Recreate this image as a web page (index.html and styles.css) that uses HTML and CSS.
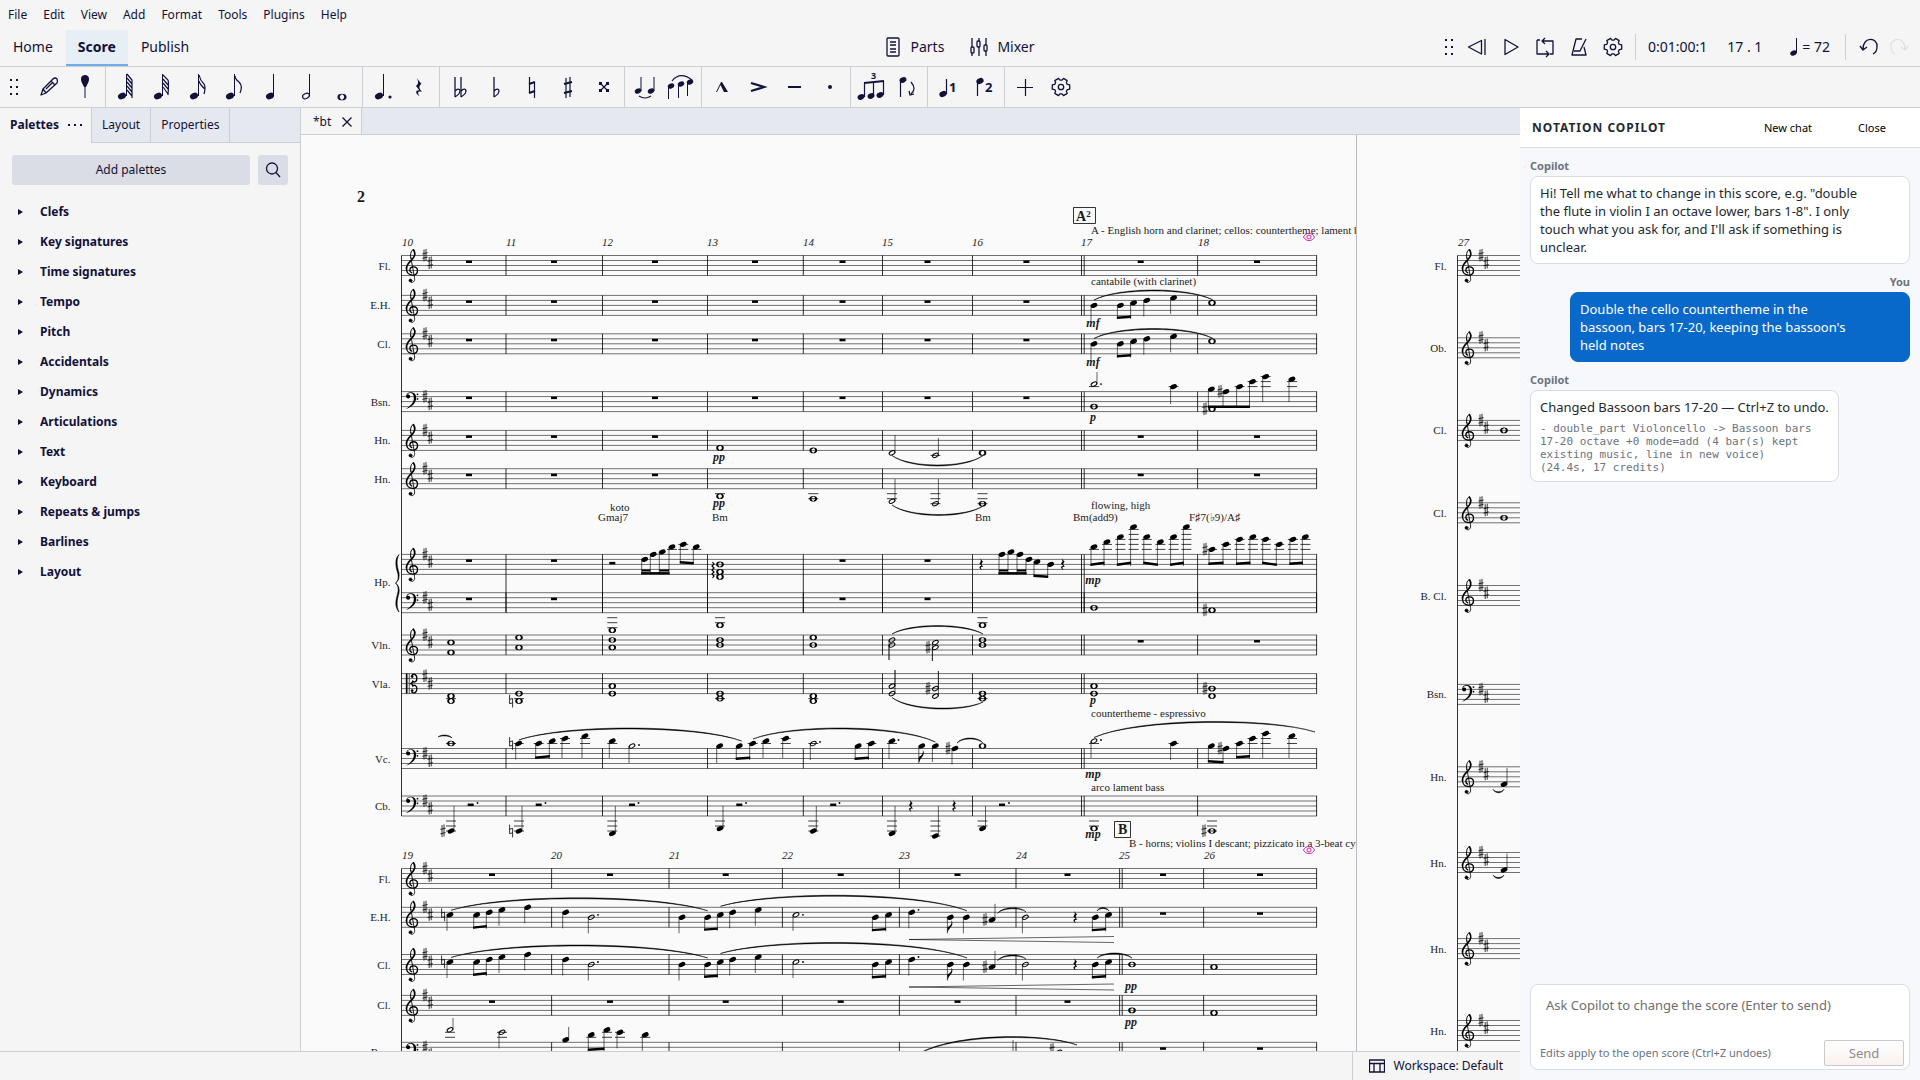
FILE: index.html
```html
<!DOCTYPE html>
<html lang="en">
<head>
<meta charset="utf-8">
<title>bt</title>
<link rel="stylesheet" href="styles.css">
</head>
<body>
<svg class="defs" aria-hidden="true">
  <defs>
    <ellipse id="n-head" rx="4.2" ry="3.1" transform="rotate(-25)"/>
    <path id="n-flat" d="M0 -13V7M0 1C5 -4 8 2 0 7" fill="none" stroke="currentColor" stroke-width="1.3"/>
    <path id="gear" d="M6.3-2.6L8.7-2.2V2.2L6.3 2.6L5.4 4.2L6.2 6.4L2.5 8.6L.9 6.8H-.9L-2.5 8.6L-6.2 6.4L-5.4 4.2L-6.3 2.6L-8.7 2.2V-2.2L-6.3-2.6L-5.4-4.2L-6.2-6.4L-2.5-8.6L-.9-6.8H.9L2.5-8.6L6.2-6.4L5.4-4.2ZM2.7 0A2.7 2.7 0 1 1-2.7 0A2.7 2.7 0 1 1 2.7 0Z" fill="none" stroke="currentColor" stroke-width="1.3" stroke-linejoin="round"/>
    <path id="q-rest" d="M-1.6-6L1.6-2.2C-.4-.4 0 .8 2 3.2C-.6 2.4-1.4 3.6 .4 6.2C-2.6 4.6-2.6 2 .2 2.2L-2-.6C-.2-2.4-.2-3.6-1.6-6Z"/>
    <g id="handle"><path d="M-4-8h2v2h-2zM2-8h2v2h-2zM-4-1h2v2h-2zM2-1h2v2h-2zM-4 6h2v2h-2zM2 6h2v2h-2z"/></g>

    <ellipse id="m-solid" rx="3.5" ry="2.3" transform="rotate(-24)"/>
    <ellipse id="m-half" rx="3.1" ry="1.8" transform="rotate(-28)" fill="none" stroke="#000" stroke-width="1"/>
    <path id="m-whole" fill-rule="evenodd" d="M-3.8 0A3.8 2.8 0 1 0 3.8 0A3.8 2.8 0 1 0-3.8 0ZM-.8-1.4A1.2 1.9 -24 1 0 .8 1.4A1.2 1.9 -24 1 0-.8-1.4Z"/>
    <path id="m-sharp" d="M-1-6V6M1-6.6V5.4M-2.6-1.6L2.6-2.8M-2.6 2.8L2.6 1.6" fill="none" stroke="#000" stroke-width=".8"/>
    <path id="m-nat" d="M-1.4-6.4V2.6L1.6 1.8M1.6 6.4V-2.6L-1.4-1.8" fill="none" stroke="#000" stroke-width=".8"/>
    <g id="m-treble" transform="scale(.3333)" fill="none" stroke="#000" stroke-linecap="round">
      <path stroke-width="3" d="M28 8C25-6 30-17 36-18"/>
      <path stroke-width="5" d="M36-17C43-7 40 4 30 14C20 23 15 31 15 40"/>
      <path stroke-width="4" d="M15 40C15 53 24 59 33 59C43 59 48 53 48 46C48 38 42 34 36 34C29 34 25 39 25 44C25 48 28 51 31 52"/>
      <path stroke-width="2.6" d="M28 6L39 66C41 76 36 82 30 81"/>
      <circle cx="27" cy="75" r="4.5" fill="#000" stroke-width="2"/>
    </g>
    <g id="m-bass" transform="scale(.3333)">
      <circle cx="20" cy="15" r="6"/><circle cx="48" cy="8" r="2.6"/><circle cx="48" cy="22" r="2.6"/>
      <path d="M14 15C14 6 20 2 28 2C39 2 44 9 44 19C44 34 31 46 13 52C28 42 37 33 37 19C37 9 33 4 27 4C21 4 17 7 17 13Z"/>
    </g>
    <g id="m-alto" transform="scale(.3333)">
      <path d="M13 0h5v60h-5zM22 0h2v60h-2z"/><circle cx="32" cy="9" r="4"/><circle cx="32" cy="51" r="4"/>
      <path d="M30 6C34 0 45 0 46 13C47 25 38 27 34 23C33 27 30 30 26 30C30 30 33 33 34 37C38 33 47 35 46 47C45 60 34 60 30 54" fill="none" stroke="#000" stroke-width="4"/>
    </g>
    <g id="m-eye" fill="none" stroke="#d6249f" stroke-width="1"><path d="M-5.500 0C-3.500-4.800 3.500-4.800 5.500 0C3.500 4.800-3.500 4.800-5.500 0Z"/><circle r="2"/></g>
  </defs>
</svg>
<div class="app">
  <nav class="menu" aria-label="Main menu">
    <button>File</button><button>Edit</button><button>View</button><button>Add</button><button>Format</button><button>Tools</button><button>Plugins</button><button>Help</button>
  </nav>
  <header class="topbar">
    <nav class="pages">
      <button>Home</button><button class="on">Score</button><button>Publish</button>
    </nav>
    <div class="views">
      <button><svg width="14" height="20" viewBox="0 0 14 20" class="line"><rect x="1" y="1" width="12" height="18" rx="1"/><path d="M4 5h6M4 8h6M4 12h6M4 15h6"/></svg>Parts</button>
      <button><svg width="18" height="20" viewBox="0 0 18 20" class="line"><path d="M2 1v9M2 16v3M9 1v3M9 10v9M16 1v7M16 14v5"/><rect x="1" y="10" width="3" height="6" rx="1"/><rect x="7" y="4" width="3" height="6" rx="1"/><rect x="14" y="8" width="3" height="6" rx="1"/></svg>Mixer</button>
    </div>
    <div class="transport">
      <svg class="grip" width="16" height="24" viewBox="-8 -12 16 24"><use href="#handle"/></svg>
      <button aria-label="Rewind"><svg width="34" height="24" viewBox="-17 -12 34 24" class="line"><path d="M4.500-6.500L-8.500 0L4.500 7Z M8 -8V8"/></svg></button>
      <button aria-label="Play"><svg width="34" height="24" viewBox="-17 -12 34 24" class="line"><path d="M-6-7.500V7.500L7 0Z"/></svg></button>
      <button aria-label="Loop"><svg width="34" height="24" viewBox="-17 -12 34 24" class="line"><path d="M-4 7H-8V-7M-5-7H-8M0-6H8V7H5M1 -6H-3M0-9L-3-6L0-3M-5 7H4M1 4L4 7L1 10"/></svg></button>
      <button aria-label="Metronome"><svg width="34" height="24" viewBox="-17 -12 34 24" class="line"><path d="M3-8H-3L-7 8H7L5 0M-5 4H1L7-8"/></svg></button>
      <button aria-label="Playback settings"><svg width="34" height="24" viewBox="-17 -12 34 24"><use href="#gear"/></svg></button>
      <div class="clock"><span>0:01:00:1</span><span>17 . 1</span><span class="tempo"><svg width="8" height="20" viewBox="0 0 8 20"><use href="#n-head" transform="translate(3.500 16) scale(.8)"/><path d="M6 1h1v15h-1z"/></svg>= 72</span></div>
      <button class="narrow" aria-label="Undo"><svg width="30" height="24" viewBox="-15 -12 30 24" class="line"><path d="M-6 2C-6-11 9-10 8 0C8 4 6 6 4 7M-9-1L-6 3L-2 0"/></svg></button>
      <button class="narrow" aria-label="Redo" disabled><svg width="30" height="24" viewBox="-15 -12 30 24" class="line"><path d="M6 2C6-11-9-10-8 0C-8 4-6 6-4 7M9-1L6 3L2 0"/></svg></button>
    </div>
  </header>
  <div class="toolbar" role="toolbar" aria-label="Note input">
    <div class="tools">
      <svg class="wide" viewBox="-14 -20 31 40"><use href="#handle"/></svg>
      <button aria-label="Note input"><svg viewBox="0 0 36 40" class="line"><path d="M10 28L12 22L22 12Q24 10 26 12Q27 14 26 16L15 26ZM12 22L15 26M20 14L24 18M15 22L22 15"/></svg></button>
      <button aria-label="Pin"><svg viewBox="0 0 36 40"><path d="M18 8C22 8 23 12 21 16L19 20H17L15 16C13 12 14 8 18 8Z"/><path d="M17 19h2v12h-2z" opacity=".5"/></svg></button>
    </div>
    <div class="tools">
      <button aria-label="64th note"><svg viewBox="0 0 36 40"><use href="#n-head" x="14" y="29"/><path d="M18 7h1v22h-1z"/><path class="s" d="M19 7L24 13V31M19 11L24 17M19 15L24 21M19 19L24 25M19 23L24 29"/></svg></button>
      <button aria-label="32nd note"><svg viewBox="0 0 36 40"><use href="#n-head" x="14" y="29"/><path d="M18 7h1v22h-1z"/><path class="s" d="M19 8L24 13Q25 16 24 28M19 12L24 18M19 16L24 22M19 20L24 27"/></svg></button>
      <button aria-label="16th note"><svg viewBox="0 0 36 40"><use href="#n-head" x="14" y="29"/><path d="M18 7h1v22h-1z"/><path class="s" d="M19 8Q20 13 24 17Q26 20 24 27M19 14Q20 18 25 22"/></svg></button>
      <button aria-label="Eighth note"><svg viewBox="0 0 36 40"><use href="#n-head" x="14" y="29"/><path d="M18 7h1v22h-1z"/><path class="s" d="M19 9Q19 12 23 15Q27 19 24 26"/></svg></button>
      <button aria-label="Quarter note"><svg viewBox="0 0 36 40"><use href="#n-head" x="18" y="29"/><path d="M21 7h1v22h-1z"/></svg></button>
      <button aria-label="Half note"><svg viewBox="0 0 36 40"><ellipse cx="18" cy="29" rx="3.600" ry="2.400" transform="rotate(-25 18 29)" class="s"/><path d="M21 7h1v22h-1z"/></svg></button>
      <button aria-label="Whole note"><svg viewBox="0 0 36 40"><use href="#m-whole" transform="translate(18 30) scale(1.200)"/></svg></button>
    </div>
    <div class="tools">
      <button aria-label="Dotted"><svg viewBox="0 0 36 40"><use href="#n-head" x="14" y="29"/><path d="M18 7h1v22h-1z"/><circle cx="25" cy="30" r="1.600"/></svg></button>
      <button aria-label="Rest"><svg viewBox="0 0 36 40"><use href="#q-rest" transform="translate(18 20) scale(1.500)"/></svg></button>
    </div>
    <div class="tools">
      <button aria-label="Double flat"><svg viewBox="0 0 36 40"><use href="#n-flat" x="13" y="23"/><use href="#n-flat" x="19" y="23"/></svg></button>
      <button aria-label="Flat"><svg viewBox="0 0 36 40"><use href="#n-flat" x="16" y="23"/></svg></button>
      <button aria-label="Natural"><svg viewBox="0 0 36 40"><path class="s" d="M15.500 10V26M20.500 31V15"/><path class="t" d="M15 17L21 15M15 26L21 24"/></svg></button>
      <button aria-label="Sharp"><svg viewBox="0 0 36 40"><path class="s" d="M16 11V31M20 10V30"/><path class="t" d="M14 17L22 15M14 26L22 24"/></svg></button>
      <button aria-label="Double sharp"><svg viewBox="0 0 36 40"><path class="s" d="M14 16L22 24M22 16L14 24"/><path d="M13 15h3v3h-3zM20 15h3v3h-3zM13 22h3v3h-3zM20 22h3v3h-3z"/></svg></button>
    </div>
    <div class="tools">
      <button aria-label="Tie"><svg viewBox="0 0 36 40"><use href="#n-head" transform="translate(11 24) scale(.8)"/><use href="#n-head" transform="translate(24 24) scale(.8)"/><path class="u" d="M14 24V10M27 24V10"/><path class="s" d="M12 29Q18 33 24 29"/></svg></button>
      <button aria-label="Slur"><svg viewBox="0 0 36 40"><use href="#n-head" transform="translate(8 19) scale(.8)"/><use href="#n-head" transform="translate(18 17) scale(.8)"/><use href="#n-head" transform="translate(27 15) scale(.8)"/><path class="u" d="M5.500 19V32M15.500 17V31M24.500 15V29"/><path class="s" d="M9 14Q17 4 29 13"/></svg></button>
    </div>
    <div class="tools">
      <button aria-label="Marcato"><svg viewBox="0 0 36 40"><path d="M12 25L17 15H18L24 25H20L16.500 18L13 25Z"/></svg></button>
      <button aria-label="Accent"><svg viewBox="0 0 36 40"><path class="t" d="M11 16L24 20L11 24"/></svg></button>
      <button aria-label="Tenuto"><svg viewBox="0 0 36 40"><path d="M12 19h13v2h-13z"/></svg></button>
      <button aria-label="Staccato"><svg viewBox="0 0 36 40"><circle cx="18" cy="20" r="2"/></svg></button>
    </div>
    <div class="tools">
      <button aria-label="Tuplet"><svg viewBox="0 0 36 40"><use href="#n-head" transform="translate(8 30) scale(.85)"/><use href="#n-head" transform="translate(18 29) scale(.85)"/><use href="#n-head" transform="translate(27 28) scale(.85)"/><path class="s" d="M11.500 30V16M20.500 28V15M30.500 28V14"/><path class="t" d="M11 16L31 14"/><text x="18" y="12" class="tiny">3</text></svg></button>
      <button aria-label="Flip direction"><svg viewBox="0 0 36 40"><use href="#n-head" transform="translate(14 13) scale(.85)"/><path class="s" d="M11.500 13V30M22 15Q28 22 22 27M20 24L21 28L25 27"/></svg></button>
    </div>
    <div class="tools">
      <button aria-label="Voice 1"><svg viewBox="0 0 36 40"><use href="#n-head" transform="translate(13 27) scale(.9)"/><path class="s" d="M16.500 27V12"/><text x="19" y="25" class="num">1</text></svg></button>
      <button aria-label="Voice 2"><svg viewBox="0 0 36 40"><use href="#n-head" transform="translate(14 14) scale(.9)"/><path class="s" d="M11.500 14V29"/><text x="19" y="25" class="num">2</text></svg></button>
    </div>
    <div class="tools last">
      <button aria-label="Add"><svg viewBox="0 0 36 40"><path class="s" d="M10 20.500H26M18.500 12V29"/></svg></button>
      <button aria-label="Customize toolbar"><svg viewBox="-18 -20 36 40"><use href="#gear"/></svg></button>
    </div>
  </div>
  <main class="body">
    <div class="workspace">
      <div class="docks">
        <aside class="dock">
          <div class="docktabs" role="tablist">
            <button class="on" role="tab">Palettes <span class="more"><i></i><i></i><i></i></span></button><button role="tab">Layout</button><button role="tab">Properties</button><span class="fill"></span>
          </div>
          <div class="find">
            <button class="add">Add palettes</button>
            <button class="search" aria-label="Search"><svg width="16" height="16" viewBox="0 0 16 16" class="line"><circle cx="7" cy="6.500" r="5.500"/><path d="M11 10.500L15 15"/></svg></button>
          </div>
          <ul class="tree">
            <li>Clefs</li><li>Key signatures</li><li>Time signatures</li><li>Tempo</li><li>Pitch</li><li>Accidentals</li><li>Dynamics</li><li>Articulations</li><li>Text</li><li>Keyboard</li><li>Repeats &amp; jumps</li><li>Barlines</li><li>Layout</li>
          </ul>
        </aside>
        <section class="editor">
          <div class="filetabs"><div class="file">*bt<button aria-label="Close score"><svg width="10" height="10" viewBox="0 0 10 10" class="line"><path d="M.500.500L9.500 9.500M9.500.500L.500 9.500"/></svg></button></div></div>
          <div class="canvas"><svg id="score" role="img" aria-label="Score"></svg></div>
        </section>
      </div>
      <footer class="status"><button><svg width="16" height="14" viewBox="0 0 16 14" class="line"><rect x=".500" y="1" width="15" height="12"/><path d="M0 4.500H16M5 4.500V13M11 4.500V13"/></svg>Workspace: Default</button></footer>
    </div>
    <aside class="copilot">
      <div class="cohead"><h2>NOTATION COPILOT</h2><button>New chat</button><button>Close</button></div>
      <div class="chat">
        <article class="msg"><h3>Copilot</h3><div class="bubble"><p>Hi! Tell me what to change in this score, e.g. "double the flute in violin I an octave lower, bars 1-8". I only touch what you ask for, and I'll ask if something is unclear.</p></div></article>
        <article class="msg me"><h3>You</h3><div class="bubble"><p>Double the cello countertheme in the bassoon, bars 17-20, keeping the bassoon's held notes</p></div></article>
        <article class="msg fit"><h3>Copilot</h3><div class="bubble"><p>Changed Bassoon bars 17-20 — Ctrl+Z to undo.</p><p class="log">- double_part Violoncello -&gt; Bassoon bars<br>17-20 octave +0 mode=add (4 bar(s) kept<br>existing music, line in new voice)<br>(24.4s, 17 credits)</p></div></article>
      </div>
      <form class="ask">
        <textarea aria-label="Message" placeholder="Ask Copilot to change the score (Enter to send)"></textarea>
        <div class="askrow"><span>Edits apply to the open score (Ctrl+Z undoes)</span><button type="button" disabled>Send</button></div>
      </form>
    </aside>
  </main>
</div>
<script src="score.js"></script>
</body>
</html>
```
FILE: styles.css
```css
* { box-sizing: border-box; }
body { margin: 0; font: 12px/16px "Noto Sans", sans-serif; color: #11113a; background: #f5f5f5; }
button { font: inherit; color: inherit; background: none; border: 0; padding: 0; margin: 0; }
svg { display: block; fill: currentColor; }
h2, h3, p, ul { margin: 0; padding: 0; }
.defs { position: absolute; width: 0; height: 0; }
.line { fill: none; stroke: currentColor; stroke-width: 1.3; stroke-linejoin: round; }
.app { display: flex; flex-direction: column; height: 100vh; overflow: hidden; }

.menu { display: flex; gap: 16px; height: 30px; padding: 0 8px; flex: none; }
.topbar { display: grid; grid-template-columns: 1fr auto 1fr; height: 36px; flex: none; font-size: 14px; }
.pages { display: flex; }
.pages button { padding: 0 13px 2px; }
.pages .on { font-weight: 700; background: #e6eef6; border-bottom: 2px solid #6fadea; padding: 0 12px; }
.views { display: flex; gap: 26px; padding-bottom: 2px; }
.views button { display: flex; align-items: center; gap: 11px; }
.views button + button { gap: 9px; }
.transport { display: flex; align-items: center; justify-content: flex-end; padding: 0 6px 2px 0; }
.grip { margin-right: 3px; }
.clock { display: flex; align-items: center; height: 26px; margin: 0 8px 0 5px; padding: 0 15px 0 12px; border: solid #cbced3; border-width: 0 1px; }
.clock span + span { margin-left: 20px; }
.clock span + .tempo { display: flex; align-items: center; gap: 4px; margin-left: 28px; }
.transport :disabled { color: #e0e1e4; }

.toolbar { display: flex; height: 42px; flex: none; border: solid #cbced3; border-width: 1px 0; }
.tools { display: flex; padding: 0 2px; border-right: 1px solid #cbced3; }
.tools:first-child { padding-left: 0; }
.tools svg { width: 36px; height: 40px; }
.tools .wide { width: 31px; }
.tools.last { border: 0; }
.s { fill: none; stroke: currentColor; stroke-width: 1.2; }
.t { fill: none; stroke: currentColor; stroke-width: 2.2; }
.u { fill: none; stroke: currentColor; stroke-width: 1; }
.tiny { font-size: 9px; font-weight: 700; }
.num { font-size: 13px; font-weight: 700; }

.body { display: flex; flex: 1; min-height: 0; }
.workspace { flex: 1; min-width: 0; display: flex; flex-direction: column; }
.docks { flex: 1; min-height: 0; display: flex; }
.dock { width: 301px; border-right: 1px solid #cbced3; }
.docktabs { display: flex; height: 35px; }
.docktabs button { padding: 0 10px; background: #e5e9ef; border: solid #cbced3; border-width: 0 1px 1px 0; }
.docktabs .on { display: flex; align-items: center; gap: 9px; width: 92px; padding-bottom: 1px; font-weight: 700; background: none; border-bottom: 0; }
.more { display: flex; gap: 4px; }
.more i { width: 2px; height: 2px; background: #11113a; }
.docktabs .fill { flex: 1; background: #e5e9ef; border-bottom: 1px solid #cbced3; }
.find { display: flex; gap: 8px; padding: 12px; }
.find button { height: 30px; border-radius: 3px; background: #dadde5; }
.find .add { flex: 1; }
.find .search { width: 30px; padding-left: 7px; }
.tree { list-style: none; font-weight: 700; }
.tree li { display: flex; align-items: center; height: 30px; padding-left: 18px; gap: 17px; }
.tree li::before { content: ""; border: solid transparent; border-width: 3px 0 3px 5px; border-left-color: #11113a; }

.editor { flex: 1; min-width: 0; display: flex; flex-direction: column; }
.filetabs { height: 27px; flex: none; background: #e5e9ef; border-bottom: 1px solid #cbced3; }
.file { display: flex; align-items: center; justify-content: space-between; width: 61px; height: 26px; padding: 1px 9px 0 12px; background: #f5f5f5; border-right: 1px solid #cbced3; }
.canvas { flex: 1; min-height: 0; overflow: hidden; background: #fafafa; }
#score { width: 100%; height: 100%; color: #000; font-family: "Liberation Serif", serif; font-size: 11px; }
#score text { fill: #1c1c1c; }
.lines { fill: none; stroke: #000; stroke-width: 1; stroke-opacity: .55; }
.ledger { fill: none; stroke: #000; stroke-width: 1; stroke-opacity: .75; }
.bar { fill: none; stroke: #000; stroke-width: 1; stroke-opacity: .8; }
.stem { fill: none; stroke: #000; stroke-width: 1; stroke-opacity: .6; }
.edge { fill: none; stroke: #b8bbc0; }
.right { text-anchor: end; }
.it { font-style: italic; }
.dyn { font-style: italic; font-weight: 700; font-size: 12px; text-anchor: middle; }
.mark { font-weight: 700; font-size: 14px; }
.pageno { font-weight: 700; font-size: 16px; }
.sup { font-size: 9px; }

.status { display: flex; justify-content: flex-end; height: 29px; flex: none; border-top: 1px solid #cbced3; }
.status button { display: flex; align-items: center; gap: 8px; padding: 0 17px 0 16px; border-left: 1px solid #cbced3; }

.copilot { width: 400px; display: flex; flex-direction: column; background: #f7f8fb; color: #24292f; }
.cohead { display: flex; align-items: center; gap: 4px; height: 40px; padding: 0 8px 0 12px; background: #fff; border-bottom: 1px solid #d8dce3; }
.cohead h2 { flex: 1; font-size: 12px; line-height: 16px; letter-spacing: 1px; }
.cohead button { width: 80px; font-size: 11px; color: #000; }
.chat { flex: 1; padding: 10px; display: flex; flex-direction: column; gap: 10px; }
.msg { display: flex; flex-direction: column; gap: 3px; }
.msg h3 { font-size: 11px; line-height: 15px; color: #6b737d; }
.bubble { padding: 7px 9px; font-size: 13px; line-height: 18px; background: #fff; border: 1px solid #d8dce3; border-radius: 8px; }
.bubble p { max-width: 330px; }
.me { padding-left: 40px; }
.me h3 { text-align: right; }
.me .bubble { background: #0969ca; border-color: #0969ca; color: #fff; }
.me .bubble p { max-width: 280px; }
.fit { align-items: flex-start; }
.bubble .log { margin-top: 6px; font: 11px/13px "DejaVu Sans Mono", monospace; color: #6b737d; }
.ask { display: flex; flex-direction: column; margin: 0 10px 10px; height: 86px; padding: 0 5px 3px 9px; background: #fff; border: 1px solid #d8dce3; border-radius: 8px; }
.ask textarea { flex: 1; min-height: 0; border: 0; padding: 11px 6px 0; resize: none; background: none; font: 13px/18px "Noto Sans", sans-serif; outline: 0; }
.ask textarea::placeholder { color: #6e6e6e; }
.askrow { display: flex; align-items: center; justify-content: space-between; font-size: 11px; color: #6b737d; }
.askrow button { width: 80px; height: 26px; font-size: 13px; color: #8c8c8c; border: 1px solid #c9c9c9; border-radius: 2px; background: linear-gradient(#fff, #f9f1ef); }
```
FILE: score.js
```js
// Draws the engraved pages. Staff positions (p) count half spaces down from the top line.
const ORIGIN = [301, 135];
const out = [];
const put = (s) => out.push(s);
const use = (id, x, y) => put(`<use href="#${id}" x="${x}" y="${y}"/>`);
const glyph = (id, x, y) => put(`<g transform="translate(${x} ${y})"><use href="#${id}"/></g>`);
const text = (x, y, s, cls = "") => put(`<text x="${x}" y="${y}" class="${cls}">${s}</text>`);
const path = (cls, d) => put(`<path class="${cls}" d="${d}"/>`);

function ledgers(x, top, p) {
  let d = "";
  for (let k = -2; k >= p; k -= 2) d += `M${x - 5} ${top + k * 2.5}h10`;
  for (let k = 10; k <= p; k += 2) d += `M${x - 5} ${top + k * 2.5}h10`;
  if (d) path("ledger", d);
}

// An arc that starts and ends thin and swells in the middle.
function slur(x1, y1, x2, y2, peak) {
  const c = peak + (peak - (y1 + y2) / 2) / 3;
  const a = x1 + (x2 - x1) * 0.2, b = x2 - (x2 - x1) * 0.2;
  put(`<path d="M${x1} ${y1}C${a} ${c} ${b} ${c} ${x2} ${y2}C${b} ${c + 1.3} ${a} ${c + 1.3} ${x1} ${y1}Z" stroke="#000" stroke-width=".5"/>`);
}

function staff(left, right, top, clef, items) {
  let d = "";
  for (let i = 0; i < 5; i++) d += `M${left} ${top + i * 5}H${right}`;
  path("lines", d);
  glyph("m-" + clef, left, top);
  const k = { treble: [0, 7.5], bass: [5, 12.5], alto: [2.5, 10] }[clef];
  glyph("m-sharp", left + 23.5, top + k[0]);
  glyph("m-sharp", left + 28.7, top + k[1]);
  for (const item of items.split(";").map((s) => s.trim()).filter(Boolean)) {
    const [op, ...v] = item.split(/\s+/);
    const x = +v[0], p = +v[1], y = top + p * 2.5;
    if (op === "R") put(`<rect x="${x - 3}" y="${top + 5}" width="6" height="2.500"/>`);
    else if (op === "h") put(`<rect x="${x - 3}" y="${top + 7.5}" width="6" height="2.500"/>`);
    else if (op === "r") glyph("q-rest", x, top + 9.5);
    else if (op === ".") put(`<circle cx="${x}" cy="${y}" r=".9"/>`);
    else if (op === "#") glyph("m-sharp", x, y);
    else if (op === "n") glyph("m-nat", x, y);
    else if (op === "S") slur(...v.map(Number));
    else if (op === "W") { ledgers(x, top, p); use("m-whole", x, y); }
    else if (op === "H" || op === "Q" || op === "E") {
      ledgers(x, top, p);
      use(op === "H" ? "m-half" : "m-solid", x, y);
      const up = v[2] === "u", sx = up ? x + 3 : x - 3;
      const end = v[3] ? +v[3] : y + (up ? -16 : 16);
      path("stem", `M${sx} ${y}V${end}`);
      if (op === "E") put(`<path d="M${sx} ${end}Q${sx + 1} ${end - 4} ${sx + 4} ${end - 7}Q${sx + 6} ${end - 10} ${sx + 4} ${end - 13}Q${sx + 5} ${end - 8} ${sx} ${end - 6}Z"/>`);
    } else if (op === "B") { // B count y1 y2 x p x p ...: notes hanging over a beam
      const n = +v[0], y1 = +v[1], y2 = +v[2], a = v.slice(3).map(Number), m = a.length / 2;
      const x1 = a[0] - 3, x2 = a[2 * m - 2] - 3;
      for (let i = 0; i < m; i++) {
        const nx = a[2 * i], ny = top + a[2 * i + 1] * 2.5;
        ledgers(nx, top, a[2 * i + 1]);
        use("m-solid", nx, ny);
        path("stem", `M${nx - 3} ${ny}V${y1}`);
        if (n === 2 && i % 2 === 0) put(`<path d="M${nx - 3} ${y1 - 5}H${a[2 * i + 2] - 3}v2H${nx - 3}Z"/>`);
      }
      put(`<path d="M${x1 - .5} ${y1}L${x2 + .5} ${y2}v-2.400L${x1 - .5} ${y1 - 2.4}Z"/>`);
    }
  }
}

function system(left, right, bars, staves, joined) {
  const last = staves[staves.length - 1].y + 20;
  path("bar", `M${left} ${staves[0].y}V${last}`);
  for (const s of staves) {
    if (s.name) text(left - 11, s.y + (s.drop || 14), s.name, "right");
    staff(left, right, s.y, s.clef || "treble", s.items || "");
    const bottom = s.y + (s.name === joined && joined ? 58 : 20);
    path("bar", bars.map((x) => `M${x} ${s.y}V${bottom}`).join(""));
  }
}

const rests = (...xs) => xs.map((x) => "R " + x).join(";") + ";";
const A = [469, 554, 655, 755, 842.5, 927.5, 1026.4, 1140.7, 1257];
const melody = (b) => `Q 1094 4 d; B 1 ${b} ${b - 1} 1120.4 4 1133.6 3; Q 1146.8 2 d; Q 1173.6 1 d; W 1212 3;
  S 1094 ${b - 19} 1213 ${b - 19} ${b - 29};`;

text(357, 202, "2", "pageno");
[[10, 402], [11, 506], [12, 602], [13, 707], [14, 803], [15, 882], [16, 972], [17, 1081], [18, 1198]]
  .forEach(([n, x]) => text(x, 246, n, "it"));

system(401.5, 1317, [506, 602.5, 707.5, 803.3, 882.5, 972.5, 1081.5, 1084.2, 1197.6, 1316.6], [
  { name: "Fl.", y: 255.5, items: rests(...A) },
  { name: "E.H.", y: 295.4, items: rests(...A.slice(0, 7)) + melody(319) },
  { name: "Cl.", y: 333.8, items: rests(...A.slice(0, 7)) + melody(357.5) },
  { name: "Bsn.", y: 391.6, clef: "bass", items: rests(...A.slice(0, 7)) +
    "H 1094 -3 u 372; . 1101 -3; Q 1173.6 -2 d 404; W 1094 6; B 1 408 408 1211.4 -1 1226 0 1239.6 -2 1252.5 -4; # 1220 0; Q 1265.7 -6 d 402; Q 1292 -5 d 402; # 1205 7; W 1212 7;" },
  { name: "Hn.", y: 430.4, items: rests(469, 554, 655, 1140.7, 1257) +
    "W 720 7; W 813.3 8; H 892 9 u 435; H 935.4 10 u 438; W 982.5 9; S 892 455.5 983 455.5 465;" },
  { name: "Hn.", y: 468.7, items: rests(469, 554, 655, 1140.7, 1257) +
    "W 720 11; W 813.3 12; H 892 13 u 479; H 935.4 14 u 479; W 982.5 14; S 892 505 983 506 514.5;" },
  { name: "Hp.", y: 554.4, drop: 32, items: rests(469, 554, 842.5, 927.5) +
    `h 612.3; B 2 574.500 574.500 644.7 2 653.3 0 662.3 -1 672 -3; B 1 563.500 564.500 683.3 -4 696.3 -3;
    W 720 4; W 720 7; W 720 9; r 981.4; B 2 574.500 574.500 1002 0 1011 -1 1020 0 1029 2; B 1 577 578 1037 3 1050.7 4; r 1063;
    B 1 566 564 1094 -3 1107 -5; B 1 566 564 1120.4 -7 1133.6 -11; B 1 564 566 1146.8 -7 1160.4 -5; B 1 566 564 1173.6 -7 1186.4 -11;
    # 1205 -2; B 1 565 564 1212 -2 1226 -4; B 1 565 564 1239.6 -6 1252.9 -7; B 1 564 566 1265.7 -6 1279.3 -4; B 1 565 564 1292.9 -6 1305.4 -7;` },
  { y: 592.7, clef: "bass", items: rests(469, 554, 842.5, 927.5) + "W 612.3 15; W 720 13; W 982.5 13; W 1094 6; # 1205 7; W 1212 7;" },
  { name: "Vln.", y: 635, items: rests(1140.7, 1257) +
    `W 451 3; W 451 7; W 519 1; W 519 5; W 612.3 2; W 612.3 5; W 720 2; W 720 4; W 813.3 1; W 813.3 4;
    H 892 2 d 660; H 892 4 d 660; # 928 5; H 935.4 3 d 661; H 935.4 5 d 661; W 982.5 2; W 982.5 4; S 892 634 983 634 625.500;` },
  { name: "Vla.", y: 673.6, clef: "alto", items:
    `W 451 9; W 451 11; n 511 11; W 519 8; W 519 11; W 612.3 5; W 612.3 8; W 720 8; W 720 10; W 813.3 9; W 813.3 11;
    H 892 8 u 670; H 892 5 u 670; # 928 6; H 935.4 9 u 671; H 935.4 6 u 671; W 982.5 8; W 982.5 10; S 892 697.500 983 702 708;
    W 1094 5; W 1094 8; # 1205 6; W 1212 6; W 1212 9;` },
  { name: "Vc.", y: 748.5, clef: "bass", items:
    `S 438 737 452 738 735; W 451 -2; n 511 -2; Q 518.7 -2 d; B 1 759 757.500 538.7 -2 552.3 -3; Q 565 -4 d 758; Q 585 -5 d 758;
    Q 612.3 -3 d 758; H 632 -1 d 763; . 639 -1.400; Q 719.7 -1 d 763; B 1 760 759 739.3 -1 752.7 -2; Q 766 -3 d 758; Q 785.7 -4 d 758;
    H 813.3 -2 d 760; . 820 -2.600; B 1 760 759 858.2 -1 871.4 -2; Q 892 -3 d 759; . 898.500 -3.400; E 921.8 -1 d 763; Q 935.4 -1 d; # 948 0; Q 955 0 d;
    S 957 743 983 743 738; W 982.5 -1; H 1094 -3 d 758; . 1101 -3.400; Q 1173.6 -2 d 760;
    B 1 762.500 763.500 1211.4 -1 1226 0; # 1220 0; B 1 758.500 757.500 1239.6 -2 1252.5 -4; Q 1265.7 -6 d 758; Q 1292 -5 d 758;
    S 518.7 740 741.7 741 728; S 753 739 935.4 742 728; S 1094 737.500 1315 732 721.500;` },
  { name: "Cb.", y: 796, clef: "bass", items:
    `# 443 14; Q 451 14 u 806; h 470.7; . 477.500 2.800; n 511 14; Q 519 14 u 806; h 538.7; . 545.500 2.800; Q 612.3 15 u 806; h 632; . 638.500 2.800;
    Q 720 13 u 806; h 739.3; . 746 2.800; Q 813.3 14 u 806; h 833.2; . 839.500 2.800; Q 892 15 u 806; r 911; Q 935.4 16 u 806; r 954.3;
    Q 982.5 13 u 806; h 1002; . 1009 2.800; W 1094 13; # 1204 14; W 1212 14;` },
], "Hp.");

// brace and arpeggio of the harp
put('<path d="M399 554.500C394 559 396 568 398 574Q399 581 395.500 583Q399 586 398 592C396 600 394 606 399 612C396 606 397 600 399 593Q400 586 395.500 583Q400 580 399 573C397 566 396 560 399 554.500Z" stroke="#000" stroke-width=".6"/>');
path("s", "M712.500 562l1.500 2l-2 2l2 2l-2 2l2 2l-2 2l2 2l-1.500 2");

[["pp", 719, 461], ["pp", 719, 507], ["mf", 1093, 327], ["mf", 1093, 366], ["p", 1093, 421], ["mp", 1093, 584], ["p", 1093, 704], ["mp", 1093, 778], ["mp", 1093, 838]]
  .forEach(([s, x, y]) => text(x, y, s, "dyn"));
text(610, 511, "koto");
text(598, 521, "Gmaj7");
text(712, 521, "Bm");
text(975, 521, "Bm");
text(1073, 521, "Bm(add9)");
text(1189, 521, "F♯7(♭9)/A♯");
text(1091, 509, "flowing, high");
text(1091, 285, "cantabile (with clarinet)");
text(1091, 234, "A - English horn and clarinet; cellos: countertheme; lament bass");
text(1091, 717, "countertheme - espressivo");
text(1091, 791, "arco lament bass");
put('<path class="bar" d="M1073.500 207.500h22v16h-22z"/><path class="bar" d="M1114.500 821.500h16v16h-16z"/>');
put('<text x="1076" y="221" class="mark">A<tspan class="sup" dy="-4">2</tspan></text>');
text(1118, 834, "B", "mark");
text(1129, 847, "B - horns; violins I descant; pizzicato in a 3-beat cycle");
use("m-eye", 1309, 237);
use("m-eye", 1309, 850);

// second system
[[19, 402], [20, 551], [21, 669], [22, 782], [23, 899], [24, 1016], [25, 1119], [26, 1204]]
  .forEach(([n, x]) => text(x, 859, n, "it"));
const C = [492, 610, 725.7, 840.7, 957.5, 1067.5, 1163, 1260];
const theme = (t) => `n 443 3; Q 450 3 d; B 1 ${t + 21.5} ${t + 20} 476.7 3 489.3 2; Q 502 1 d; Q 527.7 0 d; Q 565.7 2 d; H 591.3 4 d; . 598 3;
  Q 682 4 d; B 1 ${t + 23.5} ${t + 22.5} 707.7 4 720.3 3; Q 732.7 2 d; Q 758.3 1 d; H 796 3 d; . 803 3;
  B 1 ${t + 24} ${t + 23} 875.4 4 888.6 3; Q 911.8 2 d; . 918.5 1; E 950.4 4 d; Q 966.4 4 d; # 985 5; Q 992 5 u; H 1025.4 4 d; r 1075.4;
  B 1 ${t + 24} ${t + 23} 1095.4 4 1108.6 3;
  S 451 ${t + 3} 707.7 ${t + 3.5} ${t - 9.5}; S 720.5 ${t - 1} 967 ${t + 3.5} ${t - 12}; S 997.5 ${t + 6} 1026 ${t + 4.5} ${t + .5};`;
const hairpin = (y) => path("stem", `M1114 ${y - 3}L909 ${y}L1114 ${y + 3}`);
system(401.5, 1317, [551.6, 669, 782.4, 899.4, 1016, 1119.6, 1122.2, 1203.6, 1316.6], [
  { name: "Fl.", y: 868.5, items: rests(...C) },
  { name: "E.H.", y: 907.3, items: theme(907.3) + rests(1163, 1260) + "S 1097 911 1109 911 907.500;" },
  { name: "Cl.", y: 954.5, items: theme(954.5) + "S 1097 958 1132 958 953; W 1132 4; W 1214 5;" },
  { name: "Cl.", y: 995.4, items: rests(...C.slice(0, 6)) + "W 1132 6; W 1214 7;" },
  { name: "Bsn.", y: 1042.3, clef: "bass", items: rests(1163, 1260) +
    "H 450 -5 u 1018; H 502 -4 d; Q 565.7 -1 u 1027; B 1 1051 1050 591.3 -3 607 -5; Q 620 -4 d; Q 645.3 -3 d; S 912 1058 1077 1045 1037; # 1052 3; H 1059 4 d; H 1010 7 u 1040;" },
], "");
hairpin(939.5);
hairpin(987);
text(1131, 990, "pp", "dyn");
text(1131, 1026, "pp", "dyn");

// following page, laid over the overflow of the first
put('<rect x="1357" y="100" width="3000" height="2000" fill="#fafafa"/><path class="edge" d="M1356.500 100V2200"/>');
text(1458, 246, "27", "it");
const horn = (t) => `Q 1504 7 u ${t + 1}; S 1493 ${t + 22.5} 1504 ${t + 22.5} ${t + 25};`;
system(1457.5, 2400, [], [
  { name: "Fl.", y: 255.5 },
  { name: "Ob.", y: 337.8 },
  { name: "Cl.", y: 420.4, items: "W 1504 4" },
  { name: "Cl.", y: 502.8, items: "W 1504 6" },
  { name: "B. Cl.", y: 585.5 },
  { name: "Bsn.", y: 684.4, clef: "bass" },
  { name: "Hn.", y: 766.8, items: horn(766.8) },
  { name: "Hn.", y: 852.5, items: horn(852.5) },
  { name: "Hn.", y: 938.6 },
  { name: "Hn.", y: 1020.5 },
  { y: 1102 },
], "");

document.getElementById("score").innerHTML = `<g transform="translate(${-ORIGIN[0]} ${-ORIGIN[1]})">${out.join("")}</g>`;
```
